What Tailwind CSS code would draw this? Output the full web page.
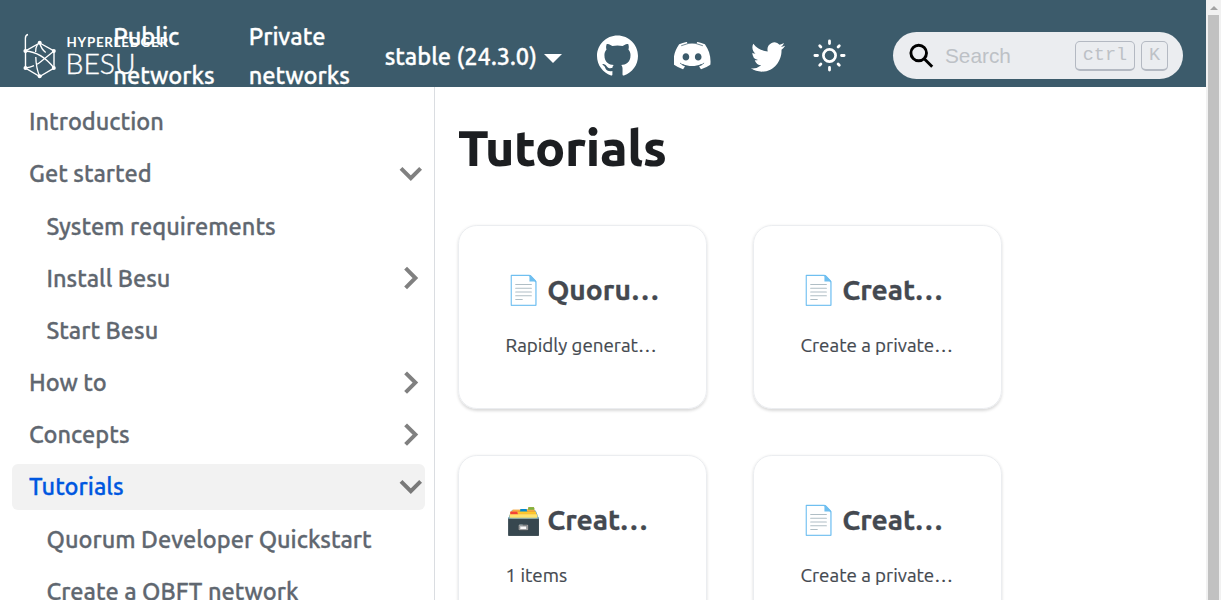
<!DOCTYPE html>
<html lang="en">
<head>
<meta charset="utf-8">
<title>Tutorials | Hyperledger Besu</title>
<script src="https://cdn.jsdelivr.net/npm/@tailwindcss/browser@4"></script>
</head>
<body class="flex h-[600px] w-[1221px] overflow-hidden bg-white font-[Ubuntu,'Noto_Sans',sans-serif] text-[23.5px] text-[#1c1e21]">
<div class="flex h-full w-[1206px] flex-col overflow-hidden">
  <nav class="flex h-[87px] shrink-0 overflow-hidden bg-[#3c5b6b] text-[23.600px] leading-[38.8px] font-medium text-white">
    <a class="mt-[31px] ml-[20px] block w-[93.300px] shrink-0">
      <svg class="overflow-visible" width="94" height="50" viewBox="20 31 94 50" fill="none" stroke="#fff">
        <path d="M28 34.5q-2.6.5-2.6 3.8V51" stroke-width="1.4"/>
        <path d="M39.7 43 54 51v17l-14.300 8.500L25.500 68V51z" stroke-width="1.400"/>
        <path d="M37.600 44q-2 3.500-2 8M35.800 57q.2 11 3.900 19.500M25.500 51q16 1 28.500 17M54 51 41 61.500q-2.500 2-4 2.800M25.500 68q4.500-.5 8.500-2.300M39.700 43q1.500 6 6 9.500" stroke-width="1.300"/>
        <g fill="#fff" stroke="none"><circle cx="39.700" cy="42.800" r="2"/><circle cx="53.800" cy="51" r="2"/><circle cx="53.800" cy="68" r="2"/><circle cx="39.700" cy="76.300" r="2"/><circle cx="25.500" cy="68" r="2"/><circle cx="25.500" cy="51" r="2.100"/></g>
        <text x="66.500" y="46.600" font-family="Lato, sans-serif" font-weight="700" font-size="13.400" textLength="101.500" fill="#fff" stroke="none">HYPERLEDGER</text>
        <text x="65.500" y="73.700" font-family="Lato, sans-serif" font-weight="300" font-size="27" textLength="70" lengthAdjust="spacingAndGlyphs" fill="#fff" stroke="#fff" stroke-width=".4">BESU</text>
      </svg>
    </a>
    <a class="mt-[17px] w-[135.400px] shrink-0 [-webkit-text-stroke:0.3px]">Public<br>networks</a>
    <a class="mt-[17px] w-[136px] shrink-0 [-webkit-text-stroke:0.3px]">Private<br>networks</a>
    <a class="mt-[36.500px] flex w-[212.300px] shrink-0 items-start gap-[7px] whitespace-nowrap [-webkit-text-stroke:0.3px]">stable (24.3.0)<span class="mt-[17px] border-x-[9px] border-t-[9.400px] border-x-transparent border-t-white"></span></a>
    <a class="mt-[35px] w-[77.500px] shrink-0"><svg width="41" height="41" viewBox="0 0 24 24" fill="#fff"><path d="M12 .297c-6.630 0-12 5.373-12 12 0 5.303 3.438 9.800 8.205 11.385.6.113.82-.258.82-.577 0-.285-.010-1.040-.015-2.040-3.338.724-4.042-1.610-4.042-1.610C4.422 18.070 3.633 17.700 3.633 17.700c-1.087-.744.084-.729.084-.729 1.205.084 1.838 1.236 1.838 1.236 1.070 1.835 2.809 1.305 3.495.998.108-.776.417-1.305.760-1.605-2.665-.300-5.466-1.332-5.466-5.930 0-1.310.465-2.380 1.235-3.220-.135-.303-.540-1.523.105-3.176 0 0 1.005-.322 3.300 1.230.960-.267 1.980-.399 3-.405 1.020.006 2.040.138 3 .405 2.280-1.552 3.285-1.230 3.285-1.230.645 1.653.240 2.873.120 3.176.765.840 1.230 1.910 1.230 3.220 0 4.610-2.805 5.625-5.475 5.920.420.360.810 1.096.810 2.220 0 1.606-.015 2.896-.015 3.286 0 .315.210.690.825.570C20.565 22.092 24 17.592 24 12.297c0-6.627-5.373-12-12-12"/></svg></a>
    <a class="mt-[42px] w-[76.500px] shrink-0"><svg width="37" height="28" viewBox="0.300 2.900 24 18.800" preserveAspectRatio="none" fill="#fff"><path d="M20.317 4.370a19.800 19.800 0 0 0-4.885-1.515.070.070 0 0 0-.079.037c-.210.375-.444.864-.608 1.250a18.300 18.300 0 0 0-5.487 0 12.600 12.600 0 0 0-.617-1.250.077.077 0 0 0-.079-.037A19.700 19.700 0 0 0 3.677 4.370a.070.070 0 0 0-.032.027C.533 9.046-.320 13.580.099 18.058a.082.082 0 0 0 .031.057 19.900 19.900 0 0 0 5.993 3.030.078.078 0 0 0 .084-.028c.462-.630.874-1.295 1.226-1.994a.076.076 0 0 0-.041-.106 13.100 13.100 0 0 1-1.872-.892.077.077 0 0 1-.008-.128c.126-.094.252-.192.372-.292a.074.074 0 0 1 .078-.010c3.928 1.793 8.180 1.793 12.061 0a.074.074 0 0 1 .079.009c.120.100.246.199.373.293a.077.077 0 0 1-.007.128 12.300 12.300 0 0 1-1.873.891.077.077 0 0 0-.041.107c.360.698.772 1.363 1.225 1.993a.076.076 0 0 0 .084.029 19.800 19.800 0 0 0 6.002-3.030.077.077 0 0 0 .032-.055c.500-5.177-.838-9.674-3.549-13.660a.061.061 0 0 0-.031-.028zM8.020 15.331c-1.183 0-2.157-1.086-2.157-2.419s.956-2.419 2.157-2.419c1.210 0 2.176 1.095 2.157 2.419 0 1.333-.956 2.419-2.157 2.419zm7.975 0c-1.183 0-2.157-1.086-2.157-2.419s.955-2.419 2.157-2.419c1.210 0 2.176 1.095 2.157 2.419 0 1.333-.946 2.419-2.157 2.419z"/><path d="M5 5.400 9.500 3.900M19 5.400l-4.500-1.500M4.200 17q1.300 1.300 3.500 2.100M19.800 17q-1.300 1.300-3.500 2.100" fill="none" stroke="#3c5b6b" stroke-width=".5"/></svg></a>
    <a class="mt-[41.500px] w-[62px] shrink-0"><svg width="34" height="30" viewBox="0 2 24 20" preserveAspectRatio="none" fill="#fff"><path d="M23.953 4.570a10 10 0 0 1-2.825.775 4.958 4.958 0 0 0 2.163-2.723c-.951.555-2.005.959-3.127 1.184a4.920 4.920 0 0 0-8.384 4.482C7.690 8.095 4.067 6.130 1.640 3.162a4.822 4.822 0 0 0-.666 2.475c0 1.710.870 3.213 2.188 4.096a4.904 4.904 0 0 1-2.228-.616v.060a4.923 4.923 0 0 0 3.946 4.827 4.996 4.996 0 0 1-2.212.085 4.936 4.936 0 0 0 4.604 3.417 9.867 9.867 0 0 1-6.102 2.105c-.390 0-.779-.023-1.170-.067a13.995 13.995 0 0 0 7.557 2.209c9.053 0 13.998-7.496 13.998-13.985 0-.210 0-.420-.015-.630a9.935 9.935 0 0 0 2.460-2.548z"/></svg></a>
    <button class="mt-[38.500px] h-[34px] w-[80px] shrink-0"><svg width="33" height="33" viewBox="0 0 33 33" fill="none" stroke="#fff" stroke-width="3" stroke-linecap="round"><circle cx="16.500" cy="16.500" r="6.100" stroke-width="2.700"/><path d="M16.500 1.900v2.600M16.500 28.500v2.600M1.900 16.500h2.600M28.500 16.500h2.600M6.700 6.700l1.200 1.200M25.100 25.100l1.200 1.200M6.700 26.300l1.200-1.200M25.100 7.900l1.200-1.200" stroke-width="2.800"/></svg></button>
    <div class="mt-8 flex h-[47px] w-[290px] shrink-0 items-center rounded-full bg-[#ebedf0] pl-4 font-['Liberation_Sans',sans-serif] font-normal text-[#bdc1c6]">
      <svg width="26" height="26" viewBox="0 0 26 26" fill="none" stroke="#000" stroke-width="2.900"><circle cx="9.700" cy="10" r="7.800"/><path d="M15.200 15.700l8 8"/></svg>
      <span class="ml-[10px] w-[130px] text-[20.800px] leading-6">Search</span>
      <kbd class="flex h-[30px] w-[60px] justify-center rounded-[5px] border border-b-[2.500px] border-[#b4b9c2] font-['Liberation_Mono',monospace] text-[18.500px] leading-[27px]">ctrl</kbd>
      <kbd class="ml-[6px] flex h-[30px] w-[27px] justify-center rounded-[5px] border border-b-[2.500px] border-[#b4b9c2] font-['Liberation_Mono',monospace] text-[18.500px] leading-[27px]">K</kbd>
    </div>
  </nav>
  <div class="flex min-h-0 flex-1">
    <aside class="flex w-[435px] shrink-0 flex-col gap-[6px] overflow-hidden border-r border-[#dadde1] pt-[11.500px] pr-[9px] pl-3 text-[23.550px] leading-[29.400px] font-medium text-[#606770] *:flex *:h-[46.200px] *:shrink-0 *:items-center *:justify-between *:rounded-[6px] *:pr-[2.400px] *:pl-[17px] *:[-webkit-text-stroke:0.3px]">
      <a>Introduction</a>
      <a>Get started<svg width="24" height="24" viewBox="0 0 24 24" fill="none" stroke="#808080" stroke-width="4"><path d="M2 6.300l9.800 9.800 9.800-9.800"/></svg></a>
      <a><span class="mt-[1.200px] ml-[17.500px]">System requirements</span></a>
      <a><span class="mt-[1.200px] ml-[17.500px]">Install Besu</span><svg width="24" height="24" viewBox="0 0 24 24" fill="none" stroke="#808080" stroke-width="4"><path d="M6.600 2.200l9.800 9.800-9.800 9.800"/></svg></a>
      <a><span class="mt-[1.200px] ml-[17.500px]">Start Besu</span></a>
      <a>How to<svg width="24" height="24" viewBox="0 0 24 24" fill="none" stroke="#808080" stroke-width="4"><path d="M6.600 1.800l9.800 9.800-9.800 9.800"/></svg></a>
      <a>Concepts<svg width="24" height="24" viewBox="0 0 24 24" fill="none" stroke="#808080" stroke-width="4"><path d="M6.600 1.800l9.800 9.800-9.800 9.800"/></svg></a>
      <a class="bg-[#f2f2f2] text-[#0057e0]">Tutorials<svg width="24" height="24" viewBox="0 0 24 24" fill="none" stroke="#797979" stroke-width="4"><path d="M2 6.300l9.800 9.800 9.800-9.800"/></svg></a>
      <a><span class="mt-[1.200px] ml-[17.500px]">Quorum Developer Quickstart</span></a>
      <a><span class="mt-[1.200px] ml-[17.500px]">Create a QBFT network</span></a>
    </aside>
    <main class="min-w-0 flex-1 overflow-hidden pt-[29px] pl-[23px]">
      <h1 class="text-[50px] leading-[62px] font-extrabold tracking-[-0.3px]">Tutorials</h1>
      <div class="mt-[47px] grid grid-cols-[249px_249px] gap-[46px] text-[#444950] *:h-[184px] *:rounded-[18.800px] *:border *:border-[#ebedf0] *:px-[46.500px] *:pt-[46px] *:shadow-[0_1.500px_3px_0_rgb(0_0_0/0.15)]">
        <a>
          <h2 class="truncate text-[28.200px] leading-[35.200px] font-bold [-webkit-text-stroke:0.3px]">📄️ Quorum Developer Quickstart</h2>
          <p class="mt-[22.500px] truncate text-[18.800px] leading-[31px] [-webkit-text-stroke:0.2px]">Rapidly generate local blockchain networks.</p>
        </a>
        <a>
          <h2 class="truncate text-[28.200px] leading-[35.200px] font-bold [-webkit-text-stroke:0.3px]">📄️ Create a QBFT network</h2>
          <p class="mt-[22.500px] truncate text-[18.800px] leading-[31px] [-webkit-text-stroke:0.2px]">Create a private network using QBFT.</p>
        </a>
        <a>
          <h2 class="truncate text-[28.200px] leading-[35.200px] font-bold [-webkit-text-stroke:0.3px]">🗃️ Create an IBFT network</h2>
          <p class="mt-[22.500px] truncate text-[18.800px] leading-[31px] [-webkit-text-stroke:0.2px]">1 items</p>
        </a>
        <a>
          <h2 class="truncate text-[28.200px] leading-[35.200px] font-bold [-webkit-text-stroke:0.3px]">📄️ Create an Ethash network</h2>
          <p class="mt-[22.500px] truncate text-[18.800px] leading-[31px] [-webkit-text-stroke:0.2px]">Create a private network using Ethash.</p>
        </a>
      </div>
    </main>
  </div>
</div>
<div class="flex h-full w-[15px] flex-col items-center bg-[#f1f1f1]">
  <span class="mt-[6px] border-x-[4px] border-b-[4px] border-x-transparent border-b-[#a3a3a3]"></span>
  <div class="mt-[5px] ml-[-1px] w-[11px] flex-1 bg-[#c1c1c1]"></div>
</div>
</body>
</html>
